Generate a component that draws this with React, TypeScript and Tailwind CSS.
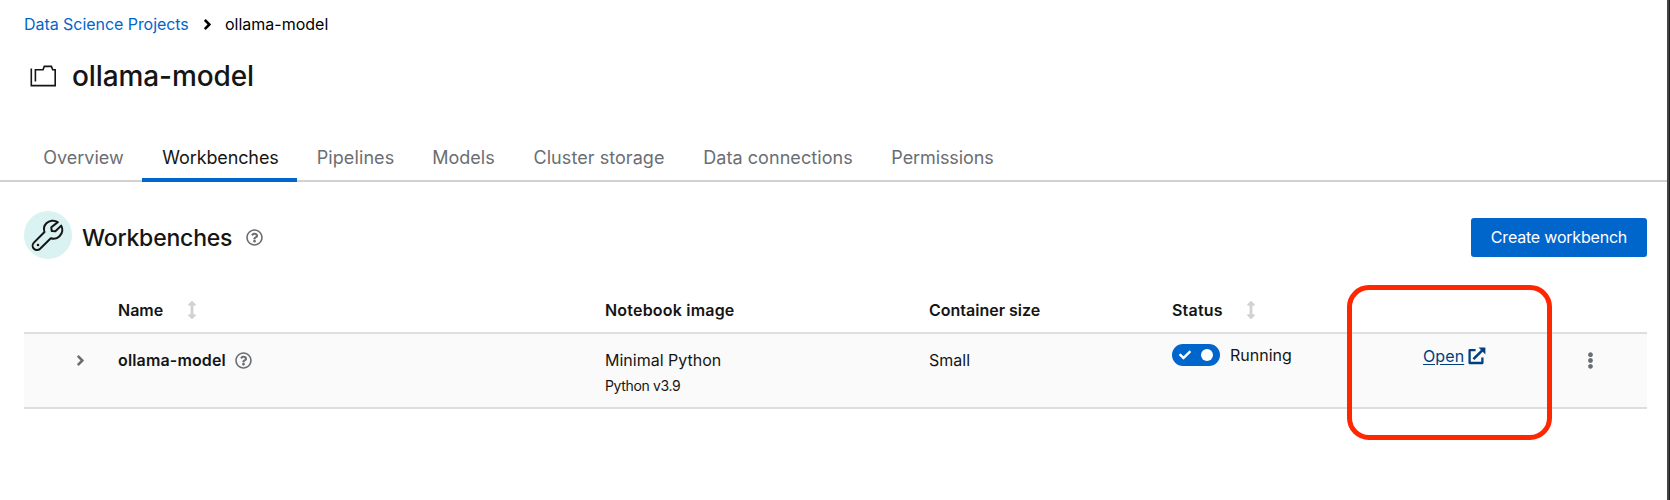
import { FaAngleRight, FaArrowsAltV, FaCheck, FaEllipsisV, FaRegQuestionCircle } from 'react-icons/fa';

const tabs = [
  { label: 'Overview', box: 'w-[118px] pl-px text-[#6a6e73]' },
  { label: 'Workbenches', box: 'w-[155px] pl-0.5 tracking-[-0.12px] text-[#151515] border-b-4 border-[#0066cc]' },
  { label: 'Pipelines', box: 'w-[116px] pl-px tracking-[0.1px] text-[#6a6e73]' },
  { label: 'Models', box: 'w-[101px] text-[#6a6e73]' },
  { label: 'Cluster storage', box: 'w-[169px] pl-px tracking-[0.06px] text-[#6a6e73]' },
  { label: 'Data connections', box: 'w-[189px] pl-px tracking-[0.06px] text-[#6a6e73]' },
  { label: 'Permissions', box: 'w-[141px] tracking-[-0.1px] text-[#6a6e73]' },
];

const columns = 'grid grid-cols-[94px_487px_324px_243px_227px_206px]';

function ProjectIcon() {
  return (
    <svg className="mt-px ml-1.5 h-6 w-7" viewBox="0 0 28 24" fill="none" stroke="#151515" strokeWidth="1.6">
      <path d="M1.3 3.5V20.6H25.2V4.8H22.7L21.4 1.4H14.3L13 4.8H5.4V16.5" />
    </svg>
  );
}

function WrenchIcon() {
  return (
    <svg className="h-12 w-12" viewBox="0 0 48 48" fill="none" stroke="#151515" strokeWidth="2" strokeLinejoin="round" strokeLinecap="round">
      <path d="M33.8 11.1C30.2 8.9 25.2 9.4 22.4 12.3C20 14.7 19.5 18 20.5 21L9.9 31.6C8.2 33.3 8.2 36.1 9.9 37.8C11.6 39.5 14.4 39.5 16.1 37.8L26.8 27.2C29.8 28.2 33.1 27.6 35.5 25.2C38.4 22.3 39 18.1 37.2 14.6L31.4 20.2L27.7 19.9L27.3 16.3Z" />
      <circle cx="14" cy="34" r="1.3" fill="#151515" stroke="none" />
    </svg>
  );
}

function ExternalLinkIcon() {
  return (
    <svg className="size-[18px]" viewBox="0 0 18 18" fill="none" stroke="#004080" strokeWidth="2.3">
      <path d="M7.6 3.2H1.6V16H14.4V10.6" strokeLinejoin="round" />
      <path d="M5.4 12.2L14.8 2.8" strokeWidth="2.6" />
      <path d="M10.6 0.6H17.4V7.4Z" fill="#004080" stroke="none" />
    </svg>
  );
}

export default function App() {
  return (
    <div className="relative flex h-[500px] w-[1670px] overflow-hidden bg-white font-['Inter',sans-serif] text-base text-[#151515]">
      <main className="flex w-[1667px] flex-col">
        <nav className="flex h-12 items-center pl-6 text-black">
          <a className="w-[165px] tracking-[-0.05px] whitespace-nowrap text-[#0066cc]">Data Science Projects</a>
          <FaAngleRight className="mx-2.5 size-[17px]" />
          <span className="-ml-px whitespace-nowrap">ollama-model</span>
        </nav>
        <header className="flex h-[56px] items-center pl-6">
          <ProjectIcon />
          <h1 className="ml-3.5 text-[28px] leading-9 font-medium tracking-[-0.1px]">ollama-model</h1>
        </header>
        <div className="mt-[29px] flex h-[49px] border-b-2 border-[#d2d2d2] pl-6 text-lg">
          {tabs.map((tab) => (
            <div key={tab.label} className={`flex h-[49px] justify-center pt-[11px] leading-7 whitespace-nowrap ${tab.box}`}>
              {tab.label}
            </div>
          ))}
        </div>
        <section className="flex flex-col pt-7 pr-5 pl-6">
          <div className="flex h-[49px] items-center">
            <div className="size-12 rounded-full bg-[#daf2f2]">
              <WrenchIcon />
            </div>
            <h2 className="mt-[7px] ml-2.5 text-[23px] leading-8 font-medium tracking-[-0.2px]">Workbenches</h2>
            <FaRegQuestionCircle className="mt-[6px] ml-3.5 size-[17px] text-[#6a6e73]" />
            <button className="mt-[5px] ml-auto h-[39px] w-[176px] rounded-[3px] bg-[#0066cc] tracking-[-0.2px] text-white">Create workbench</button>
          </div>
          <div className={`${columns} mt-[29px] h-[46px] items-center border-b-2 border-[#dedede] font-semibold`}>
            <span />
            <span className="flex items-center gap-5">Name <FaArrowsAltV className="size-[18px] text-[#d2d2d2]" /></span>
            <span className="tracking-[0.2px]">Notebook image</span>
            <span>Container size</span>
            <span className="flex items-center gap-[19px] tracking-[0.2px]">Status <FaArrowsAltV className="size-[18px] text-[#d2d2d2]" /></span>
          </div>
          <div className={`${columns} h-[75px] border-b-2 border-[#dedede] bg-[#fafafa] pt-[13px]`}>
            <FaAngleRight className="mt-[5px] ml-12 size-[17px] text-[#6a6e73]" />
            <span className="flex h-[26px] items-center gap-[9px] font-semibold tracking-[0.15px]">ollama-model <FaRegQuestionCircle className="size-[17px] text-[#6a6e73]" /></span>
            <div className="flex flex-col">
              <span className="h-[26px] leading-[26px]">Minimal Python</span>
              <span className="h-[26px] text-sm leading-[26px] tracking-[-0.35px]">Python v3.9</span>
            </div>
            <span className="leading-[26px]">Small</span>
            <div className="-mt-[3px] flex h-[22px] items-center">
              <div className="flex h-[22px] w-12 items-center justify-between rounded-full bg-[#0066cc] px-[7px]">
                <FaCheck className="size-3 text-white" />
                <span className="size-3 rounded-full bg-white" />
              </div>
              <span className="ml-2.5">Running</span>
            </div>
            <div className="flex">
              <a className="-mt-[4px] ml-6 flex h-[26px] items-center gap-1 text-[#004080]">
                <span className="tracking-[0.1px] underline underline-offset-2">Open</span>
                <ExternalLinkIcon />
              </a>
              <FaEllipsisV className="mt-[5px] mr-[6px] ml-auto size-[17px] text-[#6a6e73]" />
            </div>
          </div>
        </section>
      </main>
      <div className="w-[3px] border-r border-[#1f1f1f] bg-[#444444]" />
      <div className="absolute top-[285px] left-[1347px] h-[155px] w-[205px] rounded-[22px] border-5 border-[#ff2600]" />
    </div>
  );
}
